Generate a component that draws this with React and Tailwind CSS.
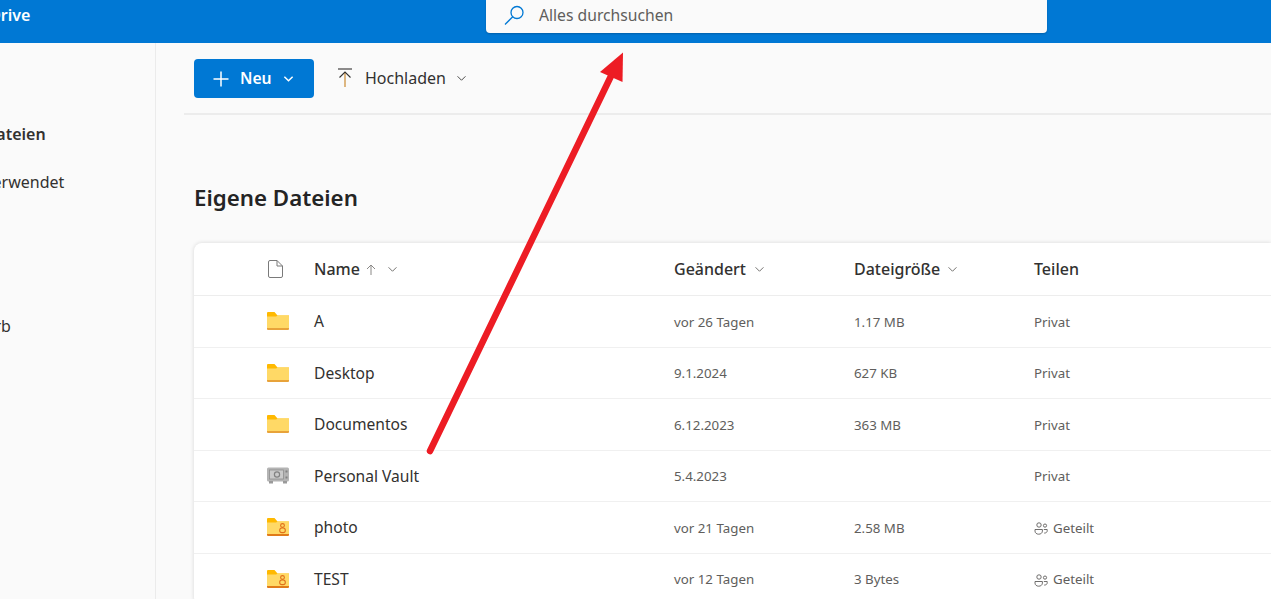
const rows = [
  { icon: 'folder', name: 'A', changed: 'vor 26 Tagen', size: '1.17 MB', share: 'Privat' },
  { icon: 'folder', name: 'Desktop', changed: '9.1.2024', size: '627 KB', share: 'Privat' },
  { icon: 'folder', name: 'Documentos', changed: '6.12.2023', size: '363 MB', share: 'Privat' },
  { icon: 'vault', name: 'Personal Vault', changed: '5.4.2023', size: '', share: 'Privat' },
  { icon: 'shared', name: 'photo', changed: 'vor 21 Tagen', size: '2.58 MB', share: 'Geteilt' },
  { icon: 'shared', name: 'TEST', changed: 'vor 12 Tagen', size: '3 Bytes', share: 'Geteilt' },
]

function Chevron({ className, color = '#605e5c', strokeWidth = 1 }) {
  return (
    <svg viewBox="0 0 12 8" className={className} fill="none" stroke={color} strokeWidth={strokeWidth}>
      <path d="M1.5 1.5 6 6l4.5-4.5" />
    </svg>
  )
}

function FolderIcon() {
  return (
    <svg viewBox="0 0 22 18" className="w-[22px] h-[18px]">
      <path d="M0 1a1 1 0 0 1 1-1h6.5l3 3.5H22v2H0z" fill="#ffb900" />
      <path d="M0 4.5h9l2-1h10a1 1 0 0 1 1 1V16H0z" fill="#ffd966" />
      <path d="M0 16h22v1a1 1 0 0 1-1 1H1a1 1 0 0 1-1-1z" fill="#e8a33a" />
    </svg>
  )
}

function SharedFolderIcon() {
  return (
    <svg viewBox="0 0 22 18" className="w-[22px] h-[18px]">
      <path d="M0 1a1 1 0 0 1 1-1h6.5l3 3.5H22v2H0z" fill="#ffb900" />
      <path d="M0 4.5h9l2-1h10a1 1 0 0 1 1 1V16H0z" fill="#ffd966" />
      <path d="M0 16h22v1a1 1 0 0 1-1 1H1a1 1 0 0 1-1-1z" fill="#e07b1a" />
      <circle cx="15.5" cy="7.5" r="1.9" fill="none" stroke="#e0701a" strokeWidth="1.1" />
      <rect x="12.7" y="10" width="5.6" height="4.6" rx="2.2" fill="none" stroke="#e0701a" strokeWidth="1.1" />
    </svg>
  )
}

function VaultIcon() {
  return (
    <svg viewBox="0 0 22 17" className="w-[22px] h-[17px]">
      <rect x="0" y="0.5" width="22" height="14" rx="1.5" fill="#b4b4b4" />
      <rect x="2" y="14" width="4" height="2.5" fill="#9a9a9a" />
      <rect x="16" y="14" width="4" height="2.5" fill="#9a9a9a" />
      <rect x="2.5" y="3" width="14" height="9" fill="#cacaca" stroke="#8e8e8e" strokeWidth="0.8" />
      <circle cx="10" cy="7.5" r="2.6" fill="none" stroke="#828282" strokeWidth="1.2" />
      <rect x="18.5" y="3.5" width="2" height="2" fill="#828282" />
      <rect x="18.5" y="9.5" width="2" height="2" fill="#828282" />
    </svg>
  )
}

function PeopleIcon() {
  return (
    <svg viewBox="0 0 14 13" className="w-[14px] h-[13px]" fill="none" stroke="#605e5c" strokeWidth="0.9">
      <circle cx="5" cy="3" r="2.2" />
      <circle cx="11" cy="3.6" r="1.6" />
      <path d="M1 7.5h7.4v1.6c0 1.8-1.6 3.1-3.7 3.1S1 10.9 1 9.1z" />
      <path d="M9.8 7.5h3.4v1.3c0 1.4-1.2 2.3-3 2.3" />
    </svg>
  )
}

function RowIcon({ type }) {
  if (type === 'vault') return <VaultIcon />
  if (type === 'shared') return <SharedFolderIcon />
  return <FolderIcon />
}

export default function App() {
  return (
    <div className="relative w-[1271px] h-[599px] overflow-hidden bg-[#fafafa] text-[#323130] font-['Noto_Sans','Open_Sans',sans-serif]">
      {/* Top bar, the product name is cut off by the left edge */}
      <header className="flex h-[43px] bg-[#0078d4]">
        <div className="w-[486px] overflow-hidden">
          <div className="-ml-[43px] pt-[3px] text-white font-semibold text-[16px] leading-[24px] whitespace-nowrap">OneDrive</div>
        </div>
        <div className="flex h-[33px] w-[561px] items-center bg-[#fafafa] rounded-b-[4px] pl-[18px] pb-[2px] shadow-[0_1px_2px_rgba(0,0,0,0.2)]">
          <svg viewBox="0 0 21 21" className="w-[21px] h-[21px]" fill="none" stroke="#0078d4" strokeWidth="1.3">
            <circle cx="13" cy="7.5" r="6" />
            <path d="M8.7 11.8 1 19.5" />
          </svg>
          <span className="ml-[14px] text-[15.7px] text-[#605e5c]">Alles durchsuchen</span>
        </div>
      </header>

      <div className="flex h-[556px]">
        <nav className="w-[156px] shrink-0 overflow-hidden border-r border-[#ebebeb] text-[16px] whitespace-nowrap">
          <div className="mt-[79px] -ml-[72px] h-[24px] leading-[24px] font-semibold">Eigene Dateien</div>
          <div className="mt-[24px] -ml-[71px] h-[24px] leading-[24px]">Zuletzt verwendet</div>
          <div className="mt-[120px] -ml-[72px] h-[24px] leading-[24px]">Papierkorb</div>
        </nav>

        <main className="flex-1 min-w-0 pl-[28px]">
          <div className="flex items-center h-[72px] border-b-2 border-[#ececec] pl-[10px]">
            <button className="flex items-center mt-[1px] h-[39px] w-[120px] rounded-[4px] bg-[#0078d4] text-white pl-[19px]">
              <svg viewBox="0 0 16 16" className="w-[16px] h-[16px]" fill="none" stroke="white" strokeWidth="1.5">
                <path d="M8 0.5v15M0.5 8h15" />
              </svg>
              <span className="ml-[11px] font-semibold text-[15.7px]">Neu</span>
              <Chevron className="ml-[11px] w-[11px] h-[8px]" color="white" strokeWidth={1.6} />
            </button>
            <svg viewBox="0 0 14 20" className="ml-[24px] w-[14px] h-[20px]" fill="none" strokeWidth="1.1">
              <path d="M0 1h14" stroke="#323130" />
              <path d="M7 19V4" stroke="#c57f1c" />
              <path d="M1.5 9.5 7 4l5.5 5.5" stroke="#323130" />
            </svg>
            <span className="ml-[13px] text-[16px]">Hochladen</span>
            <Chevron className="ml-[10px] w-[11px] h-[7px]" color="#323130" />
          </div>

          <h1 className="ml-[10px] mt-[65px] h-[36px] leading-[36px] text-[22.3px] font-semibold text-[#242424]">Eigene Dateien</h1>

          <div className="ml-[10px] mt-[27px] bg-white rounded-l-[8px] shadow-[0_0_4px_rgba(0,0,0,0.14)]">
            <div className="grid grid-cols-[120px_360px_180px_180px_1fr] items-center h-[53px] border-b border-[#ededed] text-[16px] font-medium">
              <div className="pl-[74px]">
                <svg viewBox="0 0 15 18" className="w-[15px] h-[18px]" fill="none" stroke="#7a7a7a" strokeWidth="1">
                  <path d="M2 .5h7l5.5 5.5v10a1.5 1.5 0 0 1-1.5 1.5H2A1.5 1.5 0 0 1 .5 16V2A1.5 1.5 0 0 1 2 .5z" />
                  <path d="M9 .5V6h5.5" />
                </svg>
              </div>
              <div className="flex items-center">
                Name
                <svg viewBox="0 0 10 11" className="ml-[6px] w-[10px] h-[11px]" fill="none" stroke="#8a8886" strokeWidth="1">
                  <path d="M5 11V1M1 5l4-4 4 4" />
                </svg>
                <Chevron className="ml-[11px] w-[11px] h-[7px]" />
              </div>
              <div className="flex items-center">
                Geändert
                <Chevron className="ml-[8px] w-[11px] h-[7px]" />
              </div>
              <div className="flex items-center">
                Dateigröße
                <Chevron className="ml-[7px] w-[11px] h-[7px]" />
              </div>
              <div>Teilen</div>
            </div>
            {rows.map((row) => (
              <div key={row.name} className="grid grid-cols-[120px_360px_180px_180px_1fr] items-center h-[51.5px] border-b border-[#f0f0f0]">
                <div className="pl-[73px] flex"><RowIcon type={row.icon} /></div>
                <div className="mt-[1px] text-[15.6px]">{row.name}</div>
                <div className="mt-[3px] text-[13.3px] text-[#605e5c]">{row.changed}</div>
                <div className="mt-[3px] text-[13.3px] text-[#605e5c]">{row.size}</div>
                <div className="mt-[3px] flex items-center gap-[5px] text-[13.3px] text-[#605e5c]">
                  {row.share === 'Geteilt' && <PeopleIcon />}
                  {row.share}
                </div>
              </div>
            ))}
          </div>
        </main>
      </div>

      {/* Annotation arrow drawn over the screenshot */}
      <svg viewBox="0 0 1271 599" className="absolute inset-0 w-[1271px] h-[599px] pointer-events-none">
        <path d="M430 451 612 74" stroke="#ed1c24" strokeWidth="6.5" strokeLinecap="round" fill="none" />
        <path d="M623 52.5 600 72 622.5 82z" fill="#ed1c24" />
      </svg>
    </div>
  )
}
